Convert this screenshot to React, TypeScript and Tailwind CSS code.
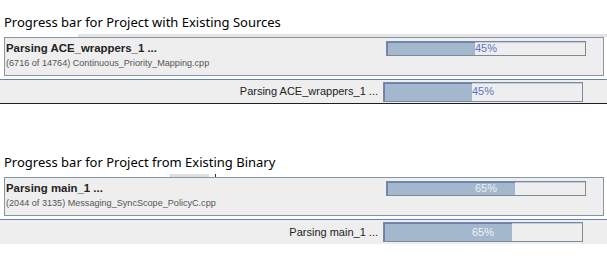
const sans = "font-['Liberation_Sans',Arial,sans-serif]";

function Bar({ pct, h, light }: { pct: number; h: string; light?: boolean }) {
  return (
    <div className={`relative w-[200px] ${h} border border-[#7a8a99] bg-[#eeeeee]`}>
      <div className="absolute inset-x-0 top-0 h-px bg-[#b8cfe5]" />
      <div
        className="absolute left-0 top-0 bottom-0 border-l border-t border-[#6382bf] bg-[#a3b8cc]"
        style={{ width: `${pct * 2 - 2}px` }}
      />
      <div
        className={`absolute inset-0 flex items-center justify-center ${sans} text-[11px] ${
          light ? "text-[#eef2f6]" : "text-[#5b75c6]"
        }`}
      >
        {pct}%
      </div>
    </div>
  );
}

function Section({
  title,
  job,
  detail,
  pct,
  light,
  dark,
}: {
  title: string;
  job: string;
  detail: string;
  pct: number;
  light?: boolean;
  dark?: boolean;
}) {
  return (
    <div>
      <div className="h-[34px] pt-[14px] pl-[4px] font-['Noto_Sans',sans-serif] text-[13px] leading-[17px] text-black">
        {title}
      </div>
      {dark ? (
        <div className="ml-[78px] h-[3px] bg-[#e4e4e4]" />
      ) : (
        <div className="flex h-[3px]">
          <div className="ml-[170px] w-px bg-[#b8cfe5]" />
          <div className="w-[38px] bg-[#e0e0e0]" />
          <div className="ml-[6px] w-px bg-[#333]" />
        </div>
      )}
      <div className="ml-[4px] mr-[3px] flex h-[39px] border border-[#8796a6] bg-[#eeeeee]">
        <div className="flex flex-col pl-[1px] pt-[3px]">
          <span className={`${sans} text-[11.4px] font-bold leading-[14px] text-[#222]`}>{job}</span>
          <span className={`${sans} mt-[3px] text-[9.1px] leading-[11px] text-[#555]`}>{detail}</span>
        </div>
        <div className="ml-auto mr-[17px] pt-[3px]">
          <Bar pct={pct} h="h-[15px]" light={light} />
        </div>
      </div>
      <div className="h-[3px]" />
      <div
        className={`flex h-[25px] items-center justify-end border-t border-[#6382bf] bg-[#eeeeee] pr-[24px] ${
          dark ? "border-b border-b-[#1c1c2c]" : ""
        }`}
      >
        <span className={`${sans} mr-[5px] text-[11px] text-[#222]`}>{job}</span>
        <Bar pct={pct} h="h-[20px]" light={light} />
      </div>
    </div>
  );
}

export default function App() {
  return (
    <div className="h-[263px] w-[607px] overflow-hidden bg-white">
      <Section
        title="Progress bar for Project with Existing Sources"
        job="Parsing ACE_wrappers_1 ..."
        detail="(6716 of 14764) Continuous_Priority_Mapping.cpp"
        pct={45}
        dark
      />
      <div className="h-[36px]" />
      <Section
        title="Progress bar for Project from Existing Binary"
        job="Parsing main_1 ..."
        detail="(2044 of 3135) Messaging_SyncScope_PolicyC.cpp"
        pct={65}
        light
      />
    </div>
  );
}
